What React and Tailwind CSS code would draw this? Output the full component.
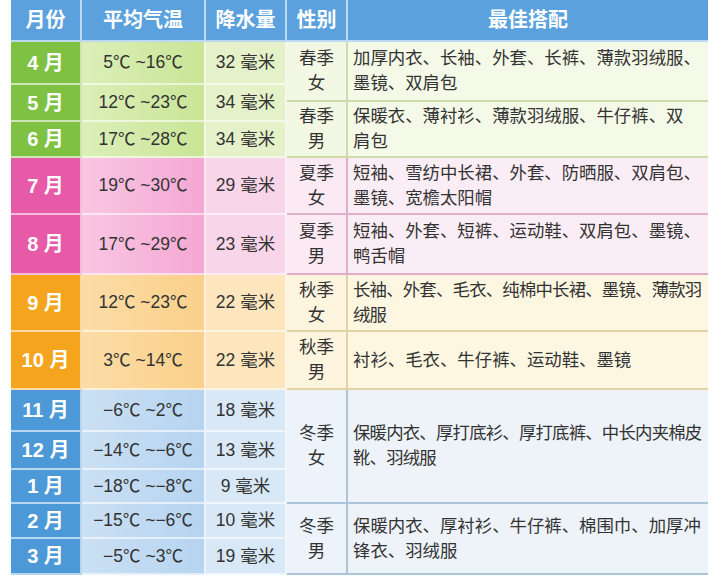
import React from 'react';

const FONT = { fontFamily: '"Liberation Sans", "Noto Sans CJK SC", sans-serif' };

const seasons = [
  {
    key: 'spring',
    month: 'bg-[#7fc243]',
    temp: 'bg-linear-to-r from-[#dcefb8] to-[#c9e596]',
    rain: 'bg-[#e4f1c9]',
    gender: 'bg-[#f3f8e4]',
    outfit: 'bg-[#f5f9e8]',
    line: 'border-[#cddcaa]',
    months: [
      { m: '4 月', t: '5℃ ~16℃', r: '32 毫米', h: 'h-[43px]' },
      { m: '5 月', t: '12℃ ~23℃', r: '34 毫米', h: 'h-[37px]' },
      { m: '6 月', t: '17℃ ~28℃', r: '34 毫米', h: 'h-[36px]' },
    ],
    groups: [
      { g: ['春季', '女'], o: ['加厚内衣、长袖、外套、长裤、薄款羽绒服、', '墨镜、双肩包'], h: 'h-[60px]' },
      { g: ['春季', '男'], o: ['保暖衣、薄衬衫、薄款羽绒服、牛仔裤、双', '肩包'], h: 'h-[56px]' },
    ],
  },
  {
    key: 'summer',
    month: 'bg-[#e65aa8]',
    temp: 'bg-linear-to-r from-[#f9c6e3] to-[#f4a8d3]',
    rain: 'bg-[#f9d5ea]',
    gender: 'bg-[#fbe9f4]',
    outfit: 'bg-[#fbedf5]',
    line: 'border-[#dfb0c8]',
    months: [
      { m: '7 月', t: '19℃ ~30℃', r: '29 毫米', h: 'h-[57px]' },
      { m: '8 月', t: '17℃ ~29℃', r: '23 毫米', h: 'h-[60px]' },
    ],
    groups: [
      { g: ['夏季', '女'], o: ['短袖、雪纺中长裙、外套、防晒服、双肩包、', '墨镜、宽檐太阳帽'], h: 'h-[57px]' },
      { g: ['夏季', '男'], o: ['短袖、外套、短裤、运动鞋、双肩包、墨镜、', '鸭舌帽'], h: 'h-[60px]' },
    ],
  },
  {
    key: 'autumn',
    month: 'bg-[#f5a41e]',
    temp: 'bg-linear-to-r from-[#fcdda6] to-[#fad08a]',
    rain: 'bg-[#fde6bd]',
    gender: 'bg-[#fef5df]',
    outfit: 'bg-[#fdf7e1]',
    line: 'border-[#e2d2a4]',
    months: [
      { m: '9 月', t: '12℃ ~23℃', r: '22 毫米', h: 'h-[57px]' },
      { m: '10 月', t: '3℃ ~14℃', r: '22 毫米', h: 'h-[58px]' },
    ],
    groups: [
      { g: ['秋季', '女'], o: ['长袖、外套、毛衣、纯棉中长裙、墨镜、薄款羽', '绒服'], tight: true, h: 'h-[57px]' },
      { g: ['秋季', '男'], o: ['衬衫、毛衣、牛仔裤、运动鞋、墨镜'], h: 'h-[58px]' },
    ],
  },
  {
    key: 'winter',
    month: 'bg-[#4d98d7]',
    temp: 'bg-linear-to-r from-[#cbe0f4] to-[#b6d4f0]',
    rain: 'bg-[#d8e8f7]',
    gender: 'bg-[#ecf3fb]',
    outfit: 'bg-[#eef3fa]',
    line: 'border-[#aac4d8]',
    months: [
      { m: '11 月', t: '−6℃ ~2℃', r: '18 毫米', h: 'h-[42px]' },
      { m: '12 月', t: '−14℃ ~−6℃', r: '13 毫米', h: 'h-[38px]' },
      { m: '1 月', t: '−18℃ ~−8℃', r: '9 毫米', h: 'h-[34px]' },
      { m: '2 月', t: '−15℃ ~−6℃', r: '10 毫米', h: 'h-[35px]' },
      { m: '3 月', t: '−5℃ ~3℃', r: '19 毫米', h: 'h-[36px]' },
    ],
    groups: [
      { g: ['冬季', '女'], o: ['保暖内衣、厚打底衫、厚打底裤、中长内夹棉皮', '靴、羽绒服'], tight: true, h: 'h-[114px]' },
      { g: ['冬季', '男'], o: ['保暖内衣、厚衬衫、牛仔裤、棉围巾、加厚冲', '锋衣、羽绒服'], h: 'h-[71px]' },
    ],
  },
];

const headers = [
  { label: '月份', w: 'w-[71px]' },
  { label: '平均气温', w: 'w-[124px]' },
  { label: '降水量', w: 'w-[81px]' },
  { label: '性别', w: 'w-[61px]' },
  { label: '最佳搭配', w: 'w-[360px]' },
];

const SeasonBlock = ({ season }) => (
  <div className="flex">
    <div className="flex flex-col">
      {season.months.map((row) => (
        <div key={row.m} className={`flex ${row.h}`}>
          <div className={`w-[71px] flex items-center justify-center border-r-2 border-b-2 border-white/60 text-white font-bold text-[20px] ${season.month}`}>
            {row.m}
          </div>
          <div className={`w-[124px] flex items-center justify-center border-r-2 border-b-2 border-white/60 text-[17.5px] text-[#333] ${season.temp}`}>
            {row.t}
          </div>
          <div className={`w-[81px] flex items-center justify-center border-r-2 border-b-2 border-white/60 text-[17.5px] text-[#333] ${season.rain}`}>
            {row.r}
          </div>
        </div>
      ))}
    </div>
    <div className="flex flex-col">
      {season.groups.map((grp) => (
        <div key={grp.o[0]} className={`flex ${grp.h}`}>
          <div className={`w-[61px] flex flex-col items-center justify-center border-r-2 border-b-2 ${season.line} text-[17.5px] leading-[25px] text-[#333] ${season.gender}`}>
            <span>{grp.g[0]}</span>
            <span>{grp.g[1]}</span>
          </div>
          <div className={`w-[360px] flex flex-col justify-center border-b-2 ${season.line} pl-[5px] text-[17.4px] leading-[25px] text-[#333] whitespace-nowrap ${grp.tight ? 'tracking-[-0.8px]' : ''} ${season.outfit}`}>
            {grp.o.map((line) => (
              <span key={line}>{line}</span>
            ))}
          </div>
        </div>
      ))}
    </div>
  </div>
);

const App = () => (
  <div className="w-[720px] h-[581px] bg-white" style={FONT}>
    <div className="ml-[11px] w-[697px] flex flex-col">
      <div className="flex h-[42px] bg-[#5aa1de]">
        {headers.map((h, i) => (
          <div
            key={h.label}
            className={`${h.w} flex items-center justify-center text-white font-bold text-[20px] border-b-2 border-white/60 ${i < headers.length - 1 ? 'border-r-2' : ''}`}
          >
            {h.label}
          </div>
        ))}
      </div>
      {seasons.map((s) => (
        <SeasonBlock key={s.key} season={s} />
      ))}
    </div>
  </div>
);

export default App;
